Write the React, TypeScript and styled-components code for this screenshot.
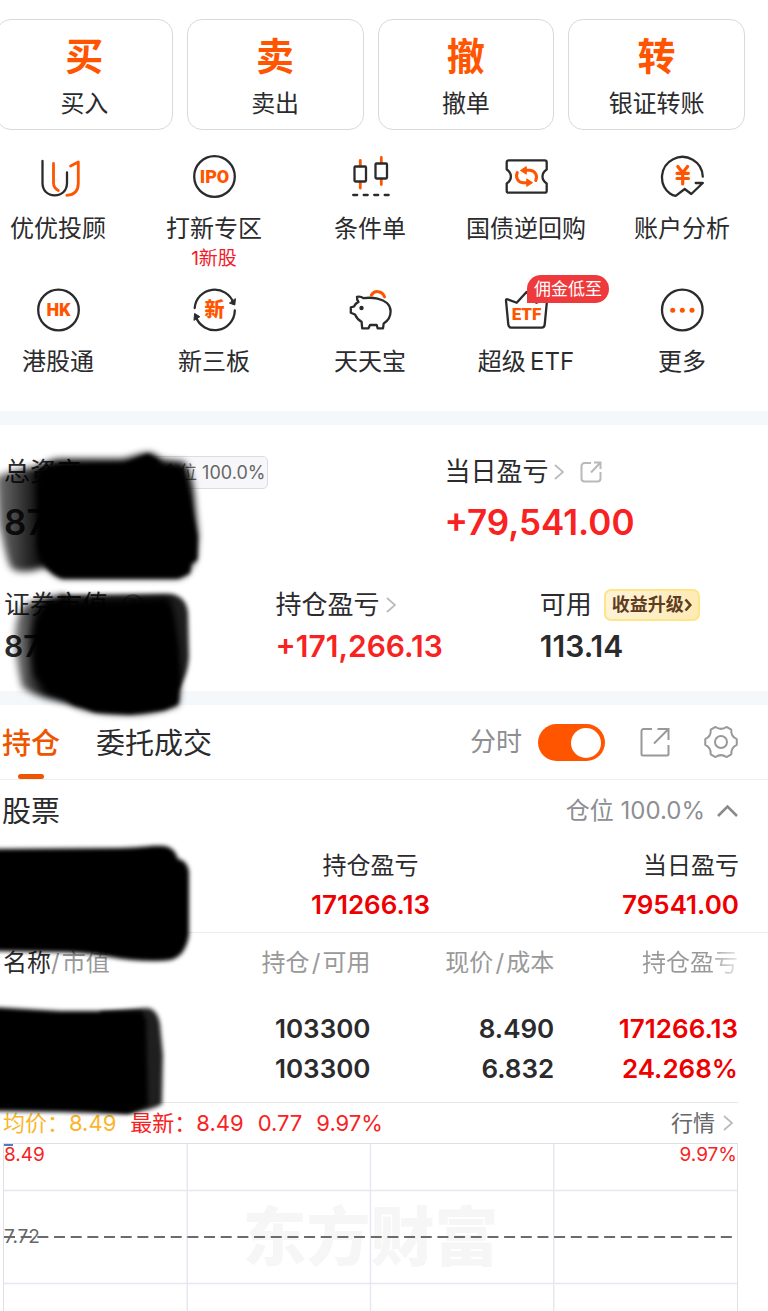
import React, { ReactNode } from "react";
import styled, { createGlobalStyle, css } from "styled-components";

const ORANGE = "#ff5500";
const INK = "#2b2b2d";
const RED = "#f82222";
const DEEP_RED = "#ee0000";

const GlobalStyle = createGlobalStyle`
  *, *::before, *::after { box-sizing: border-box; }
  body {
    margin: 0;
    background: #fff;
    color: ${INK};
    font-family: Inter, "Noto Sans CJK SC", sans-serif;
  }
  button { font: inherit; color: inherit; background: none; border: 0; padding: 0; margin: 0; cursor: pointer; }
  a { color: inherit; text-decoration: none; }
  svg { display: block; }
  h2 { margin: 0; font-weight: 400; }
`;

const Page = styled.main`
  height: 100vh;
  overflow: hidden;
`;

/* ---------- Quick trade cards ---------- */

const TradeBar = styled.nav`
  display: grid;
  grid-template-columns: repeat(4, 1fr);
  gap: 14px;
  margin: 0 23px 0 -4px;
  padding-top: 19px;
`;

const TradeCard = styled.button`
  display: flex;
  flex-direction: column;
  align-items: center;
  gap: 9px;
  padding: 13px 0 9px;
  border: 1px solid #d9d9d9;
  border-radius: 15px;
`;

const TradeGlyph = styled.span`
  font-size: 38px;
  line-height: 46px;
  font-weight: 700;
  color: ${ORANGE};
`;

const TradeLabel = styled.span`
  font-size: 24px;
  line-height: 32px;
`;

/* ---------- Shortcut grid ---------- */

const ShortcutGrid = styled.nav`
  display: grid;
  grid-template-columns: repeat(5, 1fr);
  row-gap: 18px;
  margin: 0 8px 0 -20px;
  padding: 25px 0 33px;
`;

const Shortcut = styled.a`
  display: flex;
  flex-direction: column;
  align-items: center;
`;

const ShortcutIcon = styled.span`
  position: relative;
  margin-bottom: 14px;
`;

const ShortcutLabel = styled.span`
  font-size: 24px;
  line-height: 32px;
  white-space: nowrap;
`;

const ShortcutNote = styled.span`
  margin-top: 3px;
  font-size: 19px;
  line-height: 22px;
  color: #f21c28;
`;

const PromoBadge = styled.span`
  position: absolute;
  left: 23px;
  top: -13px;
  padding: 0 7px;
  border-radius: 14px 14px 14px 0;
  background: #ee3a3c;
  color: #fff;
  font-size: 17px;
  line-height: 28px;
  white-space: nowrap;
`;

const Band = styled.div`
  height: 14px;
  background: #f4f8fa;
`;

/* ---------- Assets ---------- */

const Assets = styled.section`
  position: relative;
  padding: 30px 30px 27px 4px;
`;

const AssetRow = styled.div<{ $columns: string }>`
  display: grid;
  grid-template-columns: ${(p) => p.$columns};
  & + & { margin-top: 44px; }
`;

const AssetLabel = styled.div`
  display: flex;
  align-items: center;
  gap: 6px;
  height: 34px;
  font-size: 26px;
  line-height: 34px;
  white-space: nowrap;
`;

const AssetValue = styled.div<{ $large?: boolean; $up?: boolean }>`
  font-weight: 600;
  color: ${(p) => (p.$up ? RED : INK)};
  white-space: nowrap;
  ${(p) =>
    p.$large
      ? css`margin-top: 11px; font-size: 35px; line-height: 44px;`
      : css`margin-top: 6px; font-size: 30px; line-height: 36px;`}
`;

const PositionTag = styled.span`
  margin-left: 64px;
  padding: 0 2px 0 8px;
  border: 1px solid #dcdce2;
  border-radius: 5px;
  background: #f7f7fa;
  color: #666;
  font-size: 18px;
  line-height: 31px;
`;

const UpgradeButton = styled.button`
  display: flex;
  align-items: center;
  height: 32px;
  margin-left: 6px;
  padding: 0 6px;
  border: 2px solid #fde588;
  border-radius: 7px;
  background: linear-gradient(100deg, #fdf3d8, #feeab4);
  color: #5f3c22;
  font-size: 18px;
  line-height: 28px;
  font-weight: 700;
`;

const IconButton = styled.button<{ $indent?: boolean }>`
  display: flex;
  margin-left: ${(p) => (p.$indent ? "10px" : "0")};
`;

const HelpButton = styled.button`
  margin-left: 8px;
`;

/* ---------- Positions panel ---------- */

const TabBar = styled.div`
  display: flex;
  align-items: center;
  height: 75px;
  padding: 0 30px 0 2px;
  border-bottom: 1px solid #eeeeee;
`;

const Tab = styled.button<{ $active?: boolean }>`
  position: relative;
  height: 74px;
  padding-top: 4px;
  margin-right: 36px;
  font-size: 29px;
  line-height: 70px;
  white-space: nowrap;
  ${(p) =>
    p.$active &&
    css`
      color: #ee5500;
      font-weight: 500;
      &::after {
        content: "";
        position: absolute;
        left: 50%;
        bottom: 0;
        width: 26px;
        height: 5px;
        margin-left: -13px;
        border-radius: 3px;
        background: #ee5500;
      }
    `}
`;

const SwitchLabel = styled.label`
  display: flex;
  align-items: center;
  gap: 16px;
  margin-left: auto;
  font-size: 26px;
  line-height: 36px;
  color: #8e8e93;
`;

const Switch = styled.input`
  appearance: none;
  position: relative;
  width: 67px;
  height: 37px;
  margin: 0;
  border-radius: 19px;
  background: #d9d9d9;
  &:checked { background: ${ORANGE}; }
  &::after {
    content: "";
    position: absolute;
    top: 4px;
    left: 4px;
    width: 30px;
    height: 30px;
    border-radius: 50%;
    background: #fff;
  }
  &:checked::after { left: 33px; }
`;

const TabTools = styled.div`
  display: flex;
  align-items: center;
  gap: 34px;
  margin-left: 35px;
`;

const Panel = styled.section`
  position: relative;
`;

const PanelHead = styled.div`
  display: flex;
  align-items: center;
  justify-content: space-between;
  height: 61px;
  padding: 0 30px 0 2px;
`;

const PanelTitle = styled.h2`
  padding-top: 2px;
  font-size: 29px;
  line-height: 40px;
`;

const PositionToggle = styled.button`
  display: flex;
  align-items: center;
  gap: 12px;
  color: #8e8e93;
  font-size: 24px;
  line-height: 34px;
`;

const Totals = styled.div`
  display: grid;
  grid-template-columns: repeat(3, 1fr);
  padding: 8px 29px 10px 2px;
  border-bottom: 1px solid #ececec;
`;

const Total = styled.div<{ $align: string }>`
  text-align: ${(p) => p.$align};
`;

const TotalLabel = styled.div`
  font-size: 24px;
  line-height: 34px;
`;

const TotalValue = styled.div<{ $up?: boolean }>`
  margin-top: 5px;
  font-size: 26px;
  line-height: 34px;
  font-weight: 600;
  color: ${(p) => (p.$up ? DEEP_RED : INK)};
`;

const Inset = styled.div`
  margin: 0 30px 0 3px;
`;

const Holdings = styled.table`
  width: 100%;
  table-layout: fixed;
  border-collapse: collapse;
  text-align: right;
  border-bottom: 1px solid #e6e6e6;
`;

const HeadCell = styled.th<{ $first?: boolean; $fade?: boolean }>`
  padding: 13px 0 0;
  font-size: 24px;
  line-height: 34px;
  font-weight: 400;
  color: #999;
  white-space: nowrap;
  text-align: ${(p) => (p.$first ? "left" : "right")};
  b { font-weight: 400; color: ${INK}; }
  ${(p) =>
    p.$fade &&
    css`
      span {
        background: linear-gradient(90deg, #999 70%, #e8e8e8);
        background-clip: text;
        color: transparent;
      }
    `}
`;

const Cell = styled.td<{ $up?: boolean; $last?: boolean }>`
  height: 40px;
  padding: ${(p) => (p.$last ? "0 0 13px" : "29px 0 0")};
  font-size: 26px;
  line-height: 40px;
  font-weight: 600;
  color: ${(p) => (p.$up ? DEEP_RED : INK)};
`;

const QuoteBar = styled.div`
  display: flex;
  align-items: center;
  gap: 14px;
  height: 40px;
  font-size: 22px;
  line-height: 40px;
  color: ${RED};
  white-space: nowrap;
`;

const Average = styled.span`
  color: #fbb52c;
`;

const QuoteLink = styled.a`
  display: flex;
  align-items: center;
  gap: 8px;
  margin-left: auto;
  margin-right: 5px;
  color: #666;
`;

const ChartFrame = styled.div`
  position: relative;
  height: 188px;
  border: 1px solid #dfdfe6;
`;

const Watermark = styled.div`
  position: absolute;
  inset: 0;
  text-align: center;
  font-size: 64px;
  line-height: 186px;
  font-weight: 900;
  color: #f6f6f6;
`;

const ChartLines = styled.svg`
  position: absolute;
  inset: 0;
  width: 100%;
  height: 100%;
`;

const AxisLabel = styled.span<{ $side: "left" | "right"; $row: "top" | "mid" | "bottom" }>`
  position: absolute;
  ${(p) => p.$side}: 0;
  ${(p) => ({ top: "top: 0;", mid: "top: 82px;", bottom: "bottom: 0;" })[p.$row]}
  font-size: 19px;
  line-height: 22px;
  color: ${(p) => ({ top: RED, mid: "#666", bottom: "#3cc43c" })[p.$row]};
`;

const Scribble = styled.svg`
  position: absolute;
  left: 0;
  top: 0;
  overflow: visible;
  pointer-events: none;
`;

/* ---------- Icons ---------- */

const Icon44 = ({ children }: { children: ReactNode }) => (
  <svg width="44" height="44" viewBox="0 0 44 44" fill="none" stroke={INK} strokeWidth="2.3" strokeLinecap="round" strokeLinejoin="round" aria-hidden="true">
    {children}
  </svg>
);

const IconText = ({ size, y, children }: { size: number; y: number; children: ReactNode }) => (
  <text x="22.5" y={y} textAnchor="middle" fontSize={size} fontWeight="900" fill={ORANGE} stroke="none" fontFamily='Roboto, "Noto Sans CJK SC", sans-serif'>
    {children}
  </text>
);

const AdvisorIcon = () => (
  <Icon44>
    <path d="M6.5 6v22c0 7.5 5 12.3 12.2 12.3S31 35.5 31 28V17.5" />
    <path stroke={ORANGE} strokeWidth="2.8" d="M17.5 8.5V28c0 3.5 1.8 5.8 4.8 7.5M34.6 11l7.7-4v21c0 7.5-4 12-11.5 12.3" />
  </Icon44>
);

const IpoIcon = () => (
  <Icon44>
    <circle cx="22.5" cy="21.5" r="20.3" />
    <IconText size={18} y={28}>IPO</IconText>
  </Icon44>
);

const CandleIcon = () => (
  <Icon44>
    <path stroke={ORANGE} strokeWidth="2.8" d="M12.3 5.5v5.5M12.3 27.5v5.5M33.3 2.5V8M33.3 24.5v5" />
    <rect x="6.5" y="11.5" width="11.5" height="15" rx="1" />
    <rect x="27.5" y="8.5" width="11.5" height="15" rx="1" />
    <path strokeDasharray="4 6.5" d="M5.2 40H42" />
  </Icon44>
);

const BondIcon = () => (
  <Icon44>
    <path d="M4.7 5.3h36a2 2 0 0 1 2 2v7.2c-2.7 1.8-4.2 4.3-4.2 7s1.5 5.2 4.2 7v7.2a2 2 0 0 1-2 2h-36a2 2 0 0 1-2-2v-7.2c2.7-1.8 4.2-4.3 4.2-7s-1.5-5.2-4.2-7V7.3a2 2 0 0 1 2-2z" />
    <g stroke={ORANGE} strokeWidth="3">
      <path d="M13.3 17.5c-2.3 5 .7 10.2 6.4 10.2h3.8M31.7 25.5c2.3-5-.7-10.2-6.4-10.2h-3.8" />
      <path fill={ORANGE} strokeWidth="1" d="M23 24l5.5 3.7L23 31.2zM22 11.8l-5.5 3.7L22 19z" />
    </g>
  </Icon44>
);

const AnalysisIcon = () => (
  <Icon44>
    <path d="M42.8 21.7A20.4 20.4 0 1 0 10 38.5c1.8 1.3 3.5 2 5.7 2.3L24.7 34l6.6 5L42.8 28h-7.1" />
    <path stroke={ORANGE} strokeWidth="3.2" d="M17.8 11.5l4.9 6.3 4.9-6.3M22.7 18v11M17 18.3h11.4M17 23.5h11.4" />
  </Icon44>
);

const HkIcon = () => (
  <Icon44>
    <circle cx="22.5" cy="22" r="20.3" />
    <IconText size={18} y={28}>HK</IconText>
  </Icon44>
);

const NewBoardIcon = () => (
  <Icon44>
    <path d="M2.7 20A20 20 0 0 1 41.5 15M42.8 22.5A20 20 0 0 1 4 29" />
    <path fill={INK} strokeWidth="1" d="M37.8 15.2l5 1.8.6-6zM2 32l.6-6.5 4.9 3z" />
    <IconText size={20} y={29}>新</IconText>
  </Icon44>
);

const PiggyIcon = () => (
  <Icon44>
    <path d="M9 8.8c2.2-.5 4.5-.1 6.6 1.4 4.5-.7 9.2-.6 14 .4 7.6 1.7 13 6.2 13 12.7 0 5-2.6 9.5-6.9 12.2L35 40.3h-5.4L28.7 37H22l-1.5 3.3h-6.3l-.6-6.5c-3-1.5-5-3.8-6.6-7.3l-4.2-1.7v-5.5L6 18.5c.8-2 2.2-3.5 4.5-4.6C9.3 12.3 8.7 10.6 9 8.8z" />
    <circle cx="13.5" cy="20" r="2.2" fill={INK} stroke="none" />
    <path stroke={ORANGE} strokeWidth="3" d="M23.3 7.3c3-5.3 11-5 13.2 1.6" />
  </Icon44>
);

const EtfIcon = () => (
  <Icon44>
    <path d="M3.5 11.3l9.2 3.5L22.5 4l9.8 10.8 9.2-3.5c1-.3 1.6.2 1.5 1.2l-2.3 24.2c-.2 2-1 3-3 3H7.3c-2 0-2.8-1-3-3L2 12.5c-.1-1 .5-1.5 1.5-1.2z" />
    <IconText size={17} y={32}>ETF</IconText>
  </Icon44>
);

const MoreIcon = () => (
  <Icon44>
    <circle cx="22.3" cy="22" r="20.3" />
    <g fill={ORANGE} stroke="none">
      <circle cx="12.7" cy="22.3" r="2.5" />
      <circle cx="22.3" cy="22.3" r="2.5" />
      <circle cx="32" cy="22.3" r="2.5" />
    </g>
  </Icon44>
);

const ChevronRight = () => (
  <svg width="10" height="16" viewBox="0 0 10 16" fill="none" stroke="#bbb" strokeWidth="1.8" aria-hidden="true">
    <path d="M1 1l8 7-8 7" />
  </svg>
);

const BoldChevron = () => (
  <svg width="8" height="14" viewBox="0 0 8 14" fill="none" stroke="#5f3c22" strokeWidth="2.6" aria-hidden="true">
    <path d="M1.5 1.5L6.3 7l-4.8 5.5" />
  </svg>
);

const ChevronUp = () => (
  <svg width="21" height="13" viewBox="0 0 21 13" fill="none" stroke="#8a8a8a" strokeWidth="2.6" aria-hidden="true">
    <path d="M1 12l9.5-9.5L20 12" />
  </svg>
);

const ShareSmall = () => (
  <svg width="22" height="22" viewBox="0 0 22 22" fill="none" stroke="#b9b9b9" strokeWidth="2" aria-hidden="true">
    <path d="M11 2H4.5A3 3 0 0 0 1.5 5v12.5a3 3 0 0 0 3 3h13a3 3 0 0 0 3-3V11M14 1.5h6.5V8M20.5 1.5L11 11.5" />
  </svg>
);

const ShareLarge = () => (
  <svg width="30" height="30" viewBox="0 0 30 30" fill="none" stroke="#999" strokeWidth="2" aria-hidden="true">
    <path d="M12 2H3.500a2 2 0 0 0-2 2v23a1.500 1.500 0 0 0 1.500 1.500h24a1.500 1.500 0 0 0 1.500-1.500v-9M17.500 2h11v11M28.500 2L14 16.500" />
  </svg>
);

const gearPath = (() => {
  const at = (deg: number, r: number) => {
    const a = (deg * Math.PI) / 180;
    return `${(17 + r * Math.cos(a)).toFixed(2)} ${(17 + r * Math.sin(a)).toFixed(2)}`;
  };
  let d = "";
  for (let k = 0; k < 6; k++) {
    const c = k * 60;
    d += `${k ? "L" : "M"}${at(c - 10, 16)}L${at(c + 10, 16)}C${at(c + 20, 13)} ${at(c + 40, 13)} ${at(c + 50, 16)}`;
  }
  return d + "Z";
})();

const GearIcon = () => (
  <svg width="34" height="34" viewBox="0 0 34 34" fill="none" stroke="#999" strokeWidth="2" strokeLinejoin="round" aria-hidden="true">
    <path d={gearPath} />
    <circle cx="17" cy="17" r="6" />
  </svg>
);

const HelpIcon = () => (
  <svg width="22" height="22" viewBox="0 0 22 22" fill="none" stroke="#999" strokeWidth="1.5" aria-hidden="true">
    <circle cx="11" cy="11" r="10" />
    <path d="M8 9a3 3 0 1 1 3 3v2" />
  </svg>
);

/* ---------- Data ---------- */

const trades = [
  ["买", "买入"],
  ["卖", "卖出"],
  ["撤", "撤单"],
  ["转", "银证转账"],
];

const shortcuts: { label: string; icon: ReactNode; note?: string; badge?: string }[] = [
  { label: "优优投顾", icon: <AdvisorIcon /> },
  { label: "打新专区", icon: <IpoIcon />, note: "1新股" },
  { label: "条件单", icon: <CandleIcon /> },
  { label: "国债逆回购", icon: <BondIcon /> },
  { label: "账户分析", icon: <AnalysisIcon /> },
  { label: "港股通", icon: <HkIcon /> },
  { label: "新三板", icon: <NewBoardIcon /> },
  { label: "天天宝", icon: <PiggyIcon /> },
  { label: "超级\u2009ETF", icon: <EtfIcon />, badge: "佣金低至" },
  { label: "更多", icon: <MoreIcon /> },
];

const divisions = ["25%", "50%", "75%"];

/* Brush strokes that hide the private figures */

const AssetScribbles = () => (
  <Scribble width="210" height="300" viewBox="0 0 210 300" aria-hidden="true">
    <defs>
      <filter id="brush" x="-20%" y="-20%" width="140%" height="140%">
        <feGaussianBlur stdDeviation="2" />
      </filter>
      <filter id="brushSoft" x="-20%" y="-20%" width="140%" height="140%">
        <feGaussianBlur stdDeviation="3.5" />
      </filter>
      <linearGradient id="lobe" x1="0" x2="1" y1="0" y2="0">
        <stop offset="0" stopOpacity=".55" />
        <stop offset=".6" stopOpacity=".85" />
        <stop offset="1" stopOpacity="1" />
      </linearGradient>
      <linearGradient id="lobeLow" x1="0" x2="1" y1="0" y2="0">
        <stop offset="0" stopOpacity=".5" />
        <stop offset=".5" stopOpacity="1" />
      </linearGradient>
    </defs>
    <path filter="url(#brushSoft)" fill="url(#lobe)" d="M-4 52C10 46 30 42 50 40V140C40 144 24 150 12 144C6 136 4 118 -1 100z" />
    <path filter="url(#brushSoft)" d="M36 50C40 40 48 35 60 34L122 34C134 32 140 28 150 28C156 29 160 34 164 35L184 37C192 50 194 64 195 80L198 110L196 134L186 150L178 153L62 153C50 148 40 140 38 124z" />
    <path filter="url(#brush)" d="M40 62C46 50 56 44 68 42L125 40L148 29L158 36L166 58L188 70L192 90L197 112L197 135L190 138L190 148L178 153L62 153C50 148 40 138 38 118z" />
    <path filter="url(#brushSoft)" fill="url(#lobeLow)" d="M22 182C36 174 50 171 66 170L80 280C50 275 32 270 22 262C18 246 14 224 15 206C16 196 18 190 22 182z" />
    <path filter="url(#brush)" fillOpacity=".88" d="M60 170L172 169C182 171 187 178 188 188L189 232C188 246 184 256 178 264L60 265z" />
    <path filter="url(#brushSoft)" d="M36 190C44 180 60 177 74 176L168 172C176 184 178 214 180 240L180 262L178 280C160 286 145 289 130 289C104 289 84 286 72 279C60 270 46 264 34 252C30 232 30 206 36 190z" />
    <path filter="url(#brush)" d="M58 200L168 184L176 220L179 260L178 279L164 285L130 289L95 287L74 279L62 268z" />
  </Scribble>
);

const PanelScribbles = () => (
  <Scribble width="210" height="340" viewBox="0 0 210 340" aria-hidden="true">
    <path filter="url(#brush)" d="M-10 69L120 68C140 68 152 65 164 66C172 67 176 72 178 79C184 80 188 84 189 92L189 155C187 168 181 178 170 180C156 182 130 181 110 177C90 173 70 172 50 172L-10 171z" />
    <path filter="url(#brush)" fillOpacity=".88" d="M100 232L146 228C154 228 158 234 160 244L163 275L162 324C154 329 142 331 130 333L100 330z" />
    <path filter="url(#brush)" d="M-10 227L60 231L142 231L146 240L148 325L128 334L60 332L-10 331z" />
  </Scribble>
);

export default function App() {
  return (
    <>
      <GlobalStyle />
      <Page>
        <TradeBar>
          {trades.map(([glyph, label]) => (
            <TradeCard key={label}>
              <TradeGlyph>{glyph}</TradeGlyph>
              <TradeLabel>{label}</TradeLabel>
            </TradeCard>
          ))}
        </TradeBar>

        <ShortcutGrid>
          {shortcuts.map((s) => (
            <Shortcut key={s.label} href="#">
              <ShortcutIcon>
                {s.icon}
                {s.badge && <PromoBadge>{s.badge}</PromoBadge>}
              </ShortcutIcon>
              <ShortcutLabel>{s.label}</ShortcutLabel>
              {s.note && <ShortcutNote>{s.note}</ShortcutNote>}
            </Shortcut>
          ))}
        </ShortcutGrid>

        <Band />

        <Assets>
          <AssetRow $columns="60% 1fr">
            <div>
              <AssetLabel>
                总资产
                <PositionTag>仓位 100.0%</PositionTag>
              </AssetLabel>
              <AssetValue $large>877</AssetValue>
            </div>
            <div>
              <AssetLabel>
                当日盈亏 <ChevronRight />
                <IconButton $indent aria-label="分享">
                  <ShareSmall />
                </IconButton>
              </AssetLabel>
              <AssetValue $large $up>+79,541.00</AssetValue>
            </div>
          </AssetRow>
          <AssetRow $columns="37% 36% 1fr">
            <div>
              <AssetLabel>
                证券市值
                <HelpButton aria-label="说明"><HelpIcon /></HelpButton>
              </AssetLabel>
              <AssetValue>877</AssetValue>
            </div>
            <div>
              <AssetLabel>持仓盈亏 <ChevronRight /></AssetLabel>
              <AssetValue $up>+171,266.13</AssetValue>
            </div>
            <div>
              <AssetLabel>
                可用
                <UpgradeButton>收益升级<BoldChevron /></UpgradeButton>
              </AssetLabel>
              <AssetValue>113.14</AssetValue>
            </div>
          </AssetRow>
          <AssetScribbles />
        </Assets>

        <Band />

        <TabBar>
          <Tab $active>持仓</Tab>
          <Tab>委托成交</Tab>
          <SwitchLabel>
            分时
            <Switch type="checkbox" defaultChecked />
          </SwitchLabel>
          <TabTools>
            <IconButton aria-label="分享"><ShareLarge /></IconButton>
            <IconButton aria-label="设置"><GearIcon /></IconButton>
          </TabTools>
        </TabBar>

        <Panel>
          <PanelHead>
            <PanelTitle>股票</PanelTitle>
            <PositionToggle>仓位 100.0% <ChevronUp /></PositionToggle>
          </PanelHead>
          <Totals>
            <Total $align="left">
              <TotalLabel>市值</TotalLabel>
            </Total>
            <Total $align="center">
              <TotalLabel>持仓盈亏</TotalLabel>
              <TotalValue $up>171266.13</TotalValue>
            </Total>
            <Total $align="right">
              <TotalLabel>当日盈亏</TotalLabel>
              <TotalValue $up>79541.00</TotalValue>
            </Total>
          </Totals>

          <Inset>
            <Holdings>
              <thead>
                <tr>
                  <HeadCell $first><b>名称</b>{"/\u200A"}市值</HeadCell>
                  <HeadCell>{"持仓\u200A/\u200A可用"}</HeadCell>
                  <HeadCell>{"现价\u200A/\u200A成本"}</HeadCell>
                  <HeadCell $fade><span>持仓盈亏</span></HeadCell>
                </tr>
              </thead>
              <tbody>
                <tr>
                  <Cell />
                  <Cell>103300</Cell>
                  <Cell>8.490</Cell>
                  <Cell $up>171266.13</Cell>
                </tr>
                <tr>
                  <Cell $last />
                  <Cell $last>103300</Cell>
                  <Cell $last>6.832</Cell>
                  <Cell $last $up>24.268%</Cell>
                </tr>
              </tbody>
            </Holdings>

            <QuoteBar>
              <Average>均价：8.49</Average>
              <span>最新：8.49</span>
              <span>0.77</span>
              <span>9.97%</span>
              <QuoteLink href="#">行情 <ChevronRight /></QuoteLink>
            </QuoteBar>

            <ChartFrame>
              <Watermark>东方财富</Watermark>
              <ChartLines aria-hidden="true">
                {divisions.map((x) => (
                  <line key={x} x1={x} x2={x} y1="0" y2="100%" stroke="#e6e8f1" strokeWidth="1.5" />
                ))}
                <line x1="0" x2="100%" y1="25%" y2="25%" stroke="#e6e8f1" strokeWidth="1.5" />
                <line x1="0" x2="100%" y1="75%" y2="75%" stroke="#e6e8f1" strokeWidth="1.5" />
                <line x1="0" x2="100%" y1="50%" y2="50%" stroke="#6b6b6b" strokeWidth="2" strokeDasharray="11 5.67" />
                <path d="M0 1h9" stroke="#4a80b8" strokeWidth="2" />
              </ChartLines>
              <AxisLabel $side="left" $row="top">8.49</AxisLabel>
              <AxisLabel $side="right" $row="top">9.97%</AxisLabel>
              <AxisLabel $side="left" $row="mid">7.72</AxisLabel>
              <AxisLabel $side="left" $row="bottom">6.95</AxisLabel>
              <AxisLabel $side="right" $row="bottom">-9.97%</AxisLabel>
            </ChartFrame>
          </Inset>
          <PanelScribbles />
        </Panel>
      </Page>
    </>
  );
}
